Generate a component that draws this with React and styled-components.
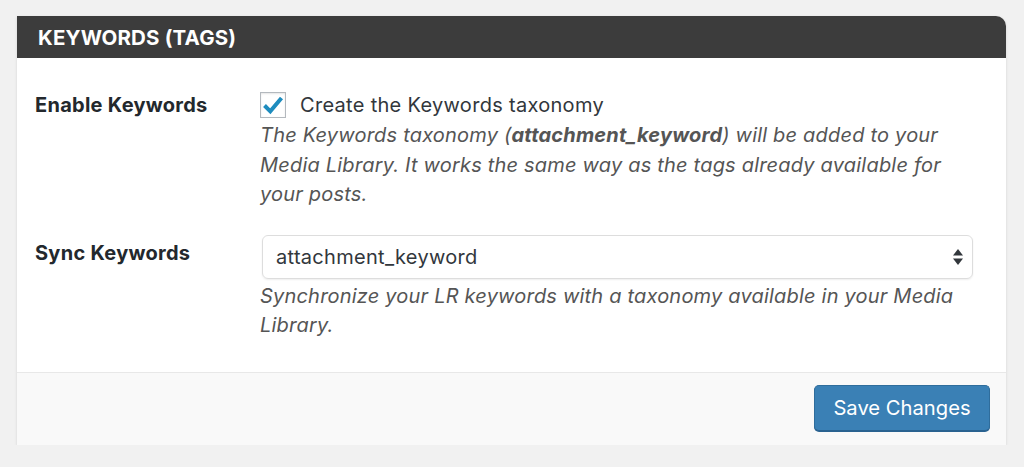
import React from 'react';
import styled, { createGlobalStyle } from 'styled-components';

const GlobalStyle = createGlobalStyle`
  html, body {
    margin: 0;
    padding: 0;
    background: #f1f1f1;
  }
  body {
    font-family: Inter, "Noto Sans", "Liberation Sans", sans-serif;
    color: #23282d;
  }
`;

const Page = styled.div`
  padding: 16px 18px 0 17px;
`;

const Card = styled.div`
  background: #fff;
  border-top-right-radius: 10px;
  box-shadow: 0 1px 3px rgba(0, 0, 0, 0.13);
  overflow: hidden;
`;

const Header = styled.div`
  height: 42px;
  display: flex;
  align-items: center;
  padding-left: 21px;
  background: #3c3c3c;
  color: #fff;
  font-size: 20.5px;
  font-weight: 700;
  letter-spacing: 0.15px;
`;

const Body = styled.div`
  padding: 34px 33px 31px 18px;
  display: flex;
  flex-direction: column;
  gap: 25px;
`;

const Row = styled.div`
  display: grid;
  grid-template-columns: 225px 1fr;
`;

const Label = styled.div`
  font-size: 20px;
  line-height: 24px;
  font-weight: 700;
  letter-spacing: 0.27px;
  color: #23282d;
  padding-top: ${(p) => p.offset || 0}px;
`;

const Field = styled.div`
  display: flex;
  flex-direction: column;
`;

const CheckRow = styled.label`
  display: flex;
  align-items: center;
  gap: 14px;
  height: 25px;
  font-size: 20px;
  letter-spacing: 0.3px;
  color: #32373c;
`;

const Box = styled.span`
  width: 24px;
  height: 24px;
  border: 1px solid #b4b9be;
  background: #fff;
  box-shadow: inset 0 1px 2px rgba(0, 0, 0, 0.1);
  display: flex;
  align-items: center;
  justify-content: center;
  flex-shrink: 0;
`;

const Description = styled.p`
  margin: ${(p) => p.top}px 0 0;
  font-size: 20px;
  line-height: 29.5px;
  font-style: italic;
  letter-spacing: 0.2px;
  color: #555;
`;

const Select = styled.div`
  height: 42px;
  margin-left: 2px;
  border: 1px solid #ddd;
  border-radius: 6px;
  box-shadow: 0 1px 2px rgba(0, 0, 0, 0.07);
  display: flex;
  align-items: center;
  justify-content: space-between;
  padding: 0 9px 0 13px;
  font-size: 20px;
  letter-spacing: 0.3px;
  color: #32373c;
`;

const Footer = styled.div`
  border-top: 1px solid #e8e8e8;
  background: #f9f9f9;
  height: 73px;
  box-sizing: border-box;
  display: flex;
  align-items: flex-start;
  justify-content: flex-end;
  padding: 12px 16px 0 0;
`;

const Button = styled.button`
  width: 176px;
  height: 46px;
  border: 1px solid #2f6d9c;
  border-bottom-color: #2a6290;
  border-radius: 5px;
  background: #3a80b5;
  color: #fff;
  font-family: inherit;
  font-size: 20.2px;
  box-shadow: 0 1px 0 #2a6290;
  cursor: pointer;
`;

const Check = () => (
  <svg width="22" height="20" viewBox="0 0 22 20">
    <path d="M2.5 10.5 L8.3 16.3 L19.5 3" fill="none" stroke="#1e8cbe" strokeWidth="4" strokeLinejoin="miter" />
  </svg>
);

const Arrows = () => (
  <svg width="10" height="16" viewBox="0 0 10 16">
    <path d="M5 0 L10 6.5 L0 6.5 Z" fill="#32373c" />
    <path d="M5 16 L10 9.5 L0 9.5 Z" fill="#32373c" />
  </svg>
);

export default function App() {
  return (
    <Page>
      <GlobalStyle />
      <Card>
        <Header>KEYWORDS (TAGS)</Header>
        <Body>
          <Row>
            <Label offset={1}>Enable Keywords</Label>
            <Field>
              <CheckRow>
                <Box><Check /></Box>
                Create the Keywords taxonomy
              </CheckRow>
              <Description top={4}>
                The Keywords taxonomy (<b>attachment_keyword</b>) will be added to your
                Media Library. It works the same way as the tags already available for
                your posts.
              </Description>
            </Field>
          </Row>
          <Row>
            <Label offset={6}>Sync Keywords</Label>
            <Field>
              <Select>
                attachment_keyword
                <Arrows />
              </Select>
              <Description top={3}>
                Synchronize your LR keywords with a taxonomy available in your Media Library.
              </Description>
            </Field>
          </Row>
        </Body>
        <Footer>
          <Button>Save Changes</Button>
        </Footer>
      </Card>
    </Page>
  );
}
